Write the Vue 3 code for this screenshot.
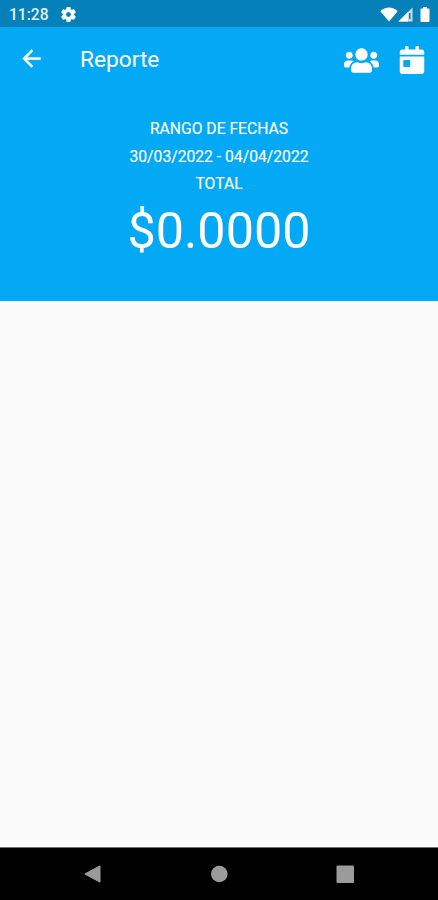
<script setup>
const report = {
  title: 'Reporte',
  rangeLabel: 'RANGO DE FECHAS',
  range: '30/03/2022 - 04/04/2022',
  totalLabel: 'TOTAL',
  total: '$0.0000',
}
</script>

<template>
  <div class="screen">
    <div class="status">
      <span class="time">11:28</span>
      <svg class="gear" viewBox="2 2 20 20">
        <path fill="#fff" stroke="#fff" stroke-width=".8" d="M19.14 12.94c.04-.3.06-.61.06-.94 0-.32-.02-.64-.07-.94l2.03-1.58c.18-.14.23-.41.12-.61l-1.92-3.32c-.12-.22-.37-.29-.59-.22l-2.39.96c-.5-.38-1.03-.7-1.62-.94l-.36-2.54c-.04-.24-.24-.41-.48-.41h-3.84c-.24 0-.43.17-.47.41l-.36 2.54c-.59.24-1.13.57-1.62.94l-2.39-.96c-.22-.08-.47 0-.59.22L2.74 8.87c-.12.21-.08.47.12.61l2.03 1.58c-.05.3-.09.63-.09.94s.02.64.07.94l-2.03 1.58c-.18.14-.23.41-.12.61l1.92 3.32c.12.22.37.29.59.22l2.39-.96c.5.38 1.03.7 1.62.94l.36 2.54c.05.24.24.41.48.41h3.84c.24 0 .44-.17.47-.41l.36-2.54c.59-.24 1.13-.56 1.62-.94l2.39.96c.22.08.47 0 .59-.22l1.92-3.32c.12-.22.07-.47-.12-.61zM12 15.6A3.6 3.6 0 1 1 12 8.4a3.6 3.6 0 0 1 0 7.2z" />
      </svg>
      <div class="system">
        <svg class="wifi" viewBox="0 0 18 15"><path fill="#fff" d="M.3 4.200C5.300-.6 12.700-.6 17.700 4.200L9 14.600z" /></svg>
        <svg class="signal" viewBox="0 0 15 15">
          <path fill="#fff" fill-opacity=".75" d="M14.500.5v14H.5z" />
          <path fill="#fff" d="M10 5v9.500H.5z" />
          <path fill="#0580b8" d="M11 6h1.500v6H11z" />
        </svg>
        <svg class="battery" viewBox="0 0 10 15"><path fill="#fff" d="M3 0h4v1.500h1.500q1 0 1 1V14q0 1-1 1h-7q-1 0-1-1V2.500q0-1 1-1H3z" /></svg>
      </div>
    </div>

    <header class="bar">
      <svg class="back" viewBox="0 0 24 24"><path fill="#fff" stroke="#fff" stroke-width=".3" d="M20 11H7.830l5.590-5.590L12 4l-8 8 8 8 1.410-1.410L7.830 13H20z" /></svg>
      <h1>{{ report.title }}</h1>
      <svg class="users" viewBox="0 32 640 448">
        <path fill="#fff" d="M96 224c35.300 0 64-28.700 64-64s-28.700-64-64-64-64 28.700-64 64 28.700 64 64 64zm448 0c35.300 0 64-28.700 64-64s-28.700-64-64-64-64 28.700-64 64 28.700 64 64 64zm32 32h-64c-17.600 0-33.500 7.100-45.100 18.600 40.300 22.100 68.900 62 75.100 109.400h66c17.700 0 32-14.300 32-32v-32c0-35.300-28.700-64-64-64zm-256 0c61.900 0 112-50.100 112-112S381.900 32 320 32 208 82.100 208 144s50.100 112 112 112zm76.800 32h-8.300c-20.800 10-43.900 16-68.500 16s-47.600-6-68.500-16h-8.300C179.600 288 128 339.600 128 403.200V432c0 26.500 21.500 48 48 48h288c26.500 0 48-21.500 48-48v-28.800c0-63.600-51.600-115.200-115.200-115.200zm-223.700-13.400C161.500 263.100 145.600 256 128 256H64c-35.300 0-64 28.700-64 64v32c0 17.700 14.300 32 32 32h65.900c6.300-47.400 34.900-87.300 75.200-109.400z" />
      </svg>
      <svg class="calendar" viewBox="0 0 448 512">
        <path fill="#fff" d="M0 464c0 26.500 21.500 48 48 48h352c26.500 0 48-21.500 48-48V192H0v272zm64-192c0-8.800 7.200-16 16-16h96c8.800 0 16 7.200 16 16v96c0 8.800-7.200 16-16 16H80c-8.800 0-16-7.200-16-16v-96zM400 64h-48V16c0-8.800-7.200-16-16-16h-32c-8.800 0-16 7.200-16 16v48H160V16c0-8.800-7.200-16-16-16h-32c-8.800 0-16 7.200-16 16v48H48C21.500 64 0 85.500 0 112v48h448v-48c0-26.500-21.500-48-48-48z" />
      </svg>
    </header>

    <section class="summary">
      <p class="label">{{ report.rangeLabel }}</p>
      <p class="range">{{ report.range }}</p>
      <p class="label">{{ report.totalLabel }}</p>
      <p class="total">{{ report.total }}</p>
    </section>

    <main class="content"></main>

    <nav class="nav">
      <svg viewBox="0 0 18 18"><path fill="#9b9b9b" stroke="#9b9b9b" stroke-linejoin="round" d="M.8 9 16 .8v16.400z" /></svg>
      <svg viewBox="0 0 18 18"><circle cx="9.300" cy="9" r="8.300" fill="#9b9b9b" /></svg>
      <svg viewBox="0 0 18 18"><rect x=".5" y=".5" width="17.500" height="17.500" rx="1" fill="#9b9b9b" /></svg>
    </nav>
  </div>
</template>

<style>
body {
  margin: 0;
}
</style>

<style scoped>
.screen {
  display: flex;
  flex-direction: column;
  width: 438px;
  height: 900px;
  overflow: hidden;
  background: #fafafa;
  color: #fff;
  font-family: Roboto, sans-serif;
}
svg {
  display: block;
  flex: none;
}
.status {
  display: flex;
  align-items: center;
  box-sizing: border-box;
  height: 27px;
  padding: 1px 8px 0 9px;
  background: #0580b8;
}
.time {
  width: 52px;
  padding-top: 2px;
  font-size: 15.600px;
  line-height: 20px;
  font-weight: 500;
  color: #e3f1f8;
}
.gear {
  width: 15px;
  height: 15px;
}
.system {
  display: flex;
  align-items: center;
  margin-left: auto;
}
.wifi {
  width: 18px;
  height: 15px;
}
.signal {
  width: 15px;
  height: 15px;
}
.battery {
  width: 10px;
  height: 15px;
  margin-left: 7px;
}
.bar {
  display: flex;
  align-items: center;
  box-sizing: border-box;
  height: 66px;
  padding: 0 13px 2px 18px;
  background: #03a9f4;
}
.back {
  width: 27px;
  height: 27px;
  margin-bottom: 1px;
}
h1 {
  flex: 1;
  margin: 1px 0 0 35px;
  font-size: 22.700px;
  line-height: 28px;
  font-weight: 400;
}
.users {
  width: 35px;
  height: 25px;
  margin-top: 2px;
}
.calendar {
  width: 26px;
  height: 28px;
  margin: 2px 0 0 20px;
}
.summary {
  box-sizing: border-box;
  height: 208px;
  padding-top: 22px;
  background: #03a9f4;
  text-align: center;
}
p {
  margin: 0;
}
.label,
.range {
  font-size: 15.700px;
  line-height: 27.500px;
  font-weight: 400;
  -webkit-text-stroke: 0.15px #fff;
}
.total {
  margin-top: 3px;
  font-size: 50.300px;
  line-height: 60px;
}
.content {
  flex: 1;
}
.nav {
  display: flex;
  justify-content: space-between;
  align-items: center;
  box-sizing: border-box;
  height: 53px;
  padding: 0 84px;
  border-top: 1px solid #707070;
  background: #000;
}
.nav svg {
  width: 18px;
  height: 18px;
}
</style>
